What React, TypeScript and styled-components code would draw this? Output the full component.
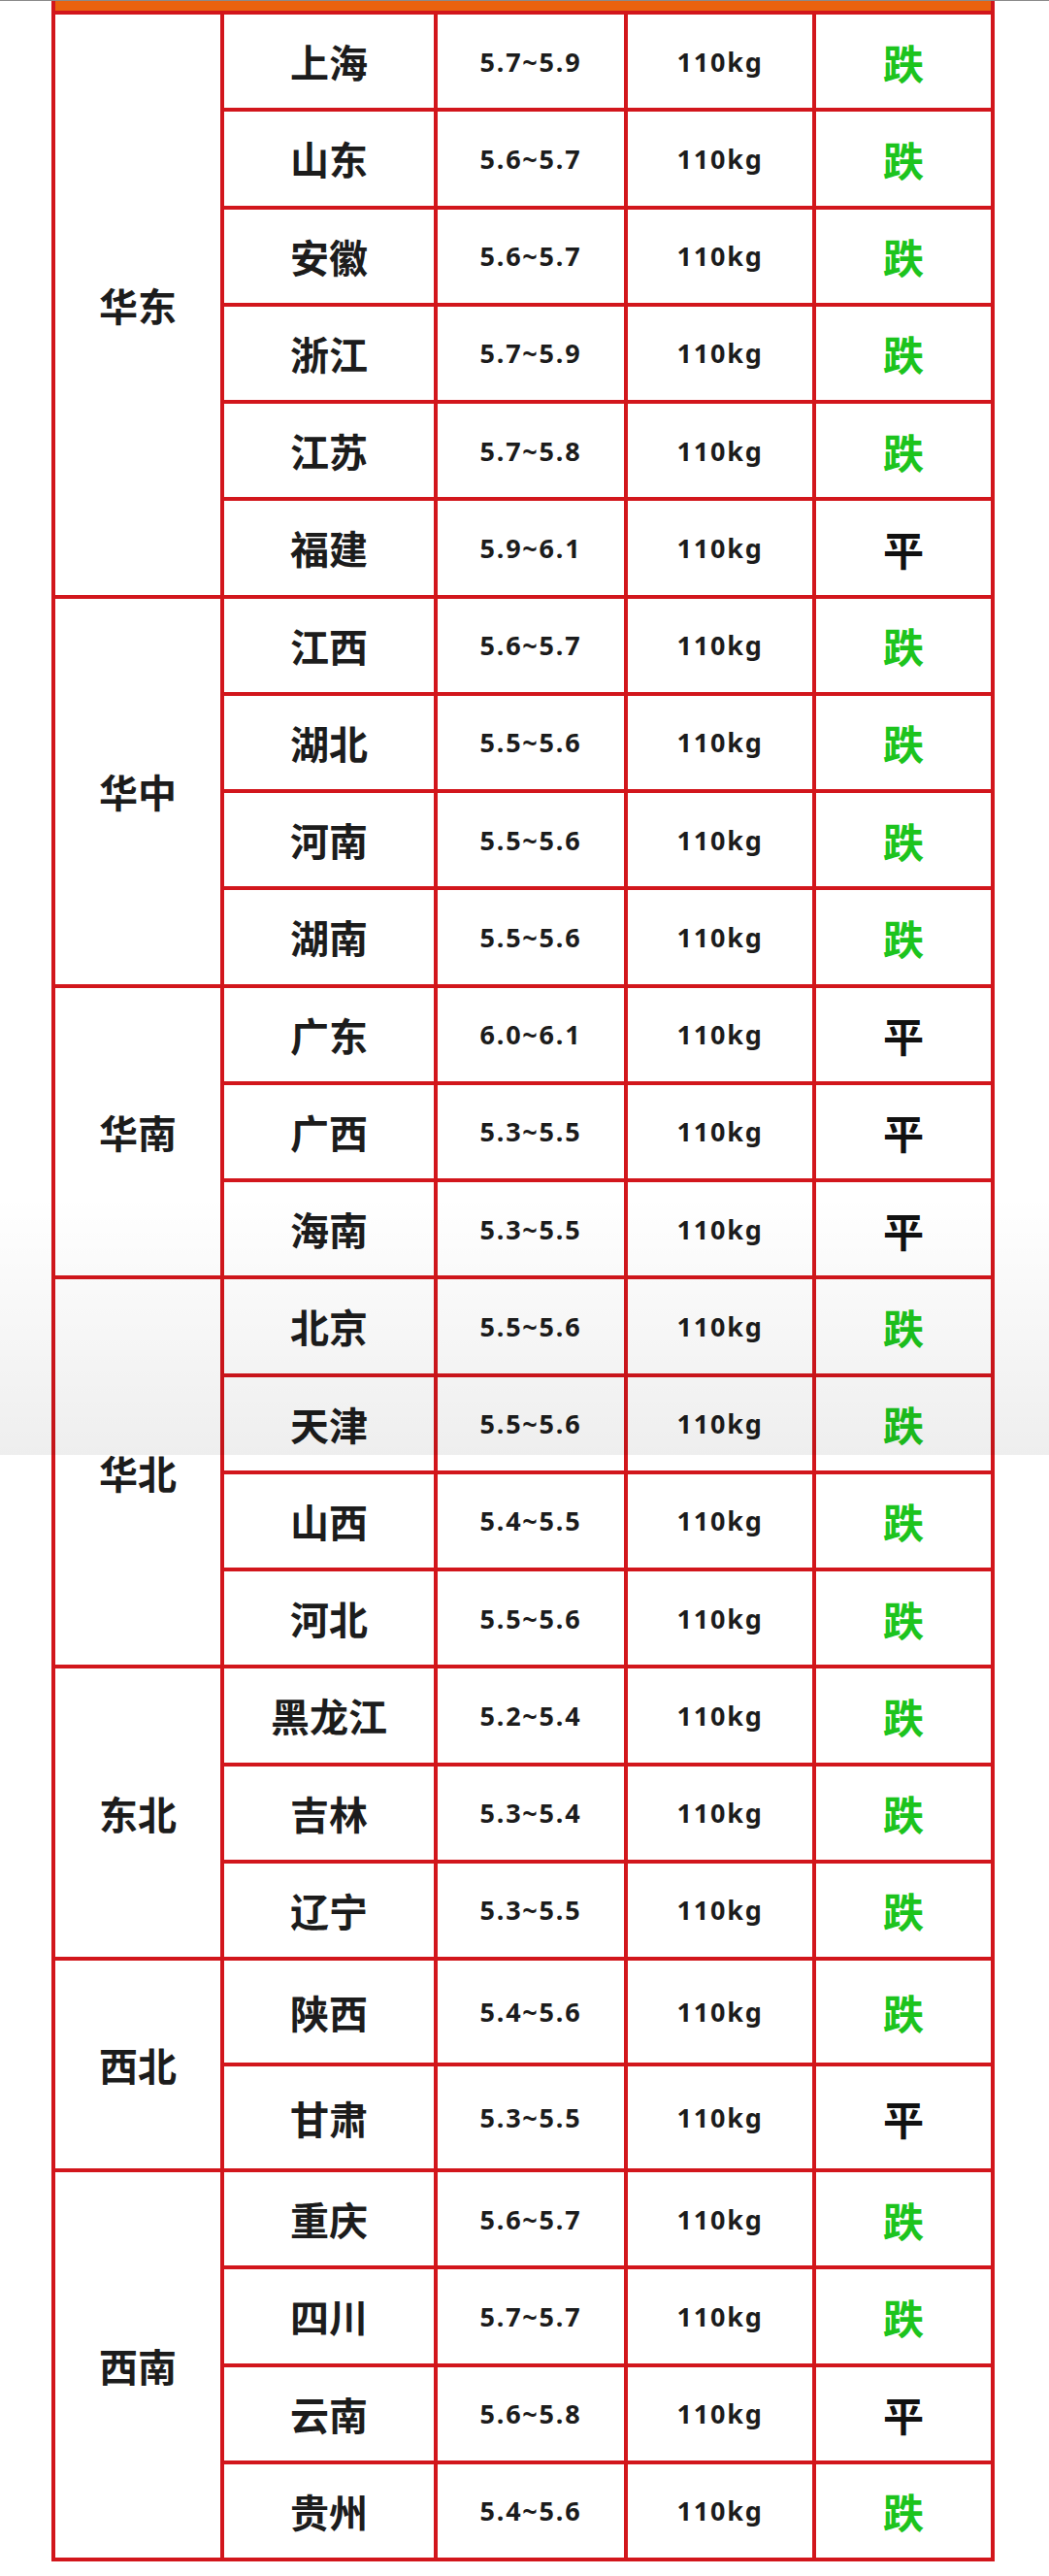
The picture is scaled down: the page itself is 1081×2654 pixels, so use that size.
import React from "react";
import styled, { createGlobalStyle } from "styled-components";

const Global = createGlobalStyle`
  html, body { margin: 0; padding: 0; background: #ffffff; }
  body { font-family: "Noto Sans CJK SC", "Noto Sans", sans-serif; }
`;

const Page = styled.div`
  position: relative;
  width: 1081px;
  height: 2654px;
  box-sizing: border-box;
  border-top: 1px solid #8a8a8a;
  background: #ffffff;
  overflow: hidden;
`;

const Shade = styled.div`
  position: absolute;
  left: 0;
  right: 0;
  top: 1230px;
  height: 268px;
  background: linear-gradient(to bottom, rgba(0, 0, 0, 0) 0%, rgba(0, 0, 0, 0.065) 100%);
  pointer-events: none;
`;

const Grid = styled.div`
  margin-left: 53px;
  width: 972px;
  box-sizing: border-box;
  display: grid;
  grid-template-columns: 170px 216px 192px 190px 180px;
  grid-template-rows: 10px repeat(20, 96.25px) 105px 105px repeat(4, 96.25px);
  gap: 4px;
  padding: 0 4px 4px 4px;
  background: #d2161c;
`;

const HeadBar = styled.div`
  grid-column: 1 / -1;
  background: #e9620f;
`;

const Cell = styled.div`
  background: #ffffff;
  display: flex;
  align-items: center;
  justify-content: center;
  color: #1c1c1c;
`;

const RegionCell = styled(Cell)<{ $span: number }>`
  grid-row: span ${(p) => p.$span};
  grid-column: 1;
  font-size: 40px;
  font-weight: 700;
`;

const NameCell = styled(Cell)`
  grid-column: 2;
  font-size: 40px;
  font-weight: 700;
`;

const NumCell = styled(Cell)`
  font-family: "Noto Sans", "Noto Sans CJK SC", sans-serif;
  font-size: 27px;
  font-weight: 700;
  letter-spacing: 1.8px;
`;

const TrendCell = styled(Cell)<{ $down: boolean }>`
  font-size: 42px;
  font-weight: 700;
  color: ${(p) => (p.$down ? "#1dc41d" : "#111111")};
`;

type Row = [string, string, boolean];
const groups: { region: string; rows: Row[] }[] = [
  {
    region: "华东",
    rows: [
      ["上海", "5.7~5.9", true],
      ["山东", "5.6~5.7", true],
      ["安徽", "5.6~5.7", true],
      ["浙江", "5.7~5.9", true],
      ["江苏", "5.7~5.8", true],
      ["福建", "5.9~6.1", false],
    ],
  },
  {
    region: "华中",
    rows: [
      ["江西", "5.6~5.7", true],
      ["湖北", "5.5~5.6", true],
      ["河南", "5.5~5.6", true],
      ["湖南", "5.5~5.6", true],
    ],
  },
  {
    region: "华南",
    rows: [
      ["广东", "6.0~6.1", false],
      ["广西", "5.3~5.5", false],
      ["海南", "5.3~5.5", false],
    ],
  },
  {
    region: "华北",
    rows: [
      ["北京", "5.5~5.6", true],
      ["天津", "5.5~5.6", true],
      ["山西", "5.4~5.5", true],
      ["河北", "5.5~5.6", true],
    ],
  },
  {
    region: "东北",
    rows: [
      ["黑龙江", "5.2~5.4", true],
      ["吉林", "5.3~5.4", true],
      ["辽宁", "5.3~5.5", true],
    ],
  },
  {
    region: "西北",
    rows: [
      ["陕西", "5.4~5.6", true],
      ["甘肃", "5.3~5.5", false],
    ],
  },
  {
    region: "西南",
    rows: [
      ["重庆", "5.6~5.7", true],
      ["四川", "5.7~5.7", true],
      ["云南", "5.6~5.8", false],
      ["贵州", "5.4~5.6", true],
    ],
  },
];

export default function App() {
  return (
    <>
      <Global />
      <Page>
        <Grid>
          <HeadBar />
          {groups.map((g) => (
            <React.Fragment key={g.region}>
              <RegionCell $span={g.rows.length}>{g.region}</RegionCell>
              {g.rows.map(([name, price, down]) => (
                <React.Fragment key={name}>
                  <NameCell>{name}</NameCell>
                  <NumCell>{price}</NumCell>
                  <NumCell>110kg</NumCell>
                  <TrendCell $down={down}>{down ? "跌" : "平"}</TrendCell>
                </React.Fragment>
              ))}
            </React.Fragment>
          ))}
        </Grid>
        <Shade />
      </Page>
    </>
  );
}
